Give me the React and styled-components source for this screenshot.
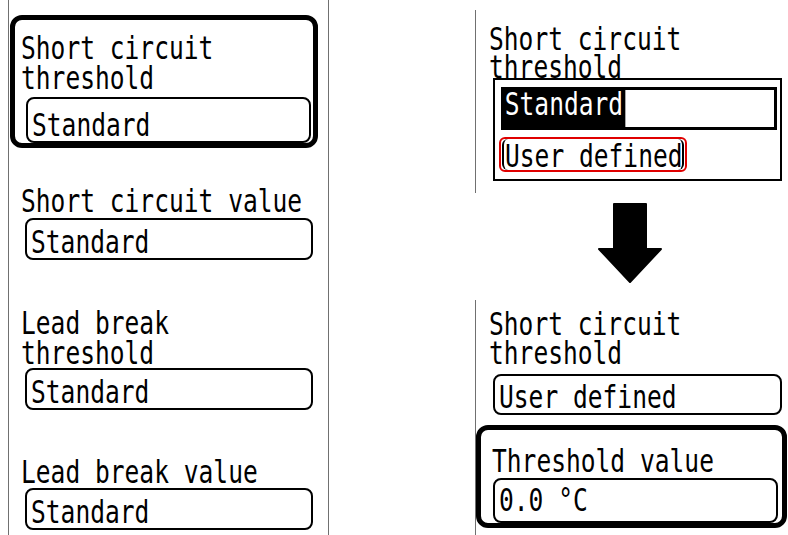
import React from "react";
import styled, { createGlobalStyle } from "styled-components";

const GlobalStyle = createGlobalStyle`
  html, body {
    margin: 0;
    padding: 0;
    background: #fff;
  }
  body {
    width: 788px;
    height: 535px;
    overflow: hidden;
  }
`;

const Page = styled.div`
  display: flex;
  align-items: flex-start;
  width: 788px;
  height: 535px;
  padding-left: 8px;
  box-sizing: border-box;
  font-family: "DejaVu Sans Mono", "Liberation Mono", monospace;
  font-size: 32px;
  line-height: 30px;
  color: #000;
`;

const LeftScreen = styled.div`
  width: 321px;
  height: 535px;
  box-sizing: border-box;
  border-left: 1px solid #707070;
  border-right: 1px solid #707070;
  padding: 15px 0 0 1px;
`;

const RightColumn = styled.div`
  margin-left: 146px;
  width: 313px;
  display: flex;
  flex-direction: column;
`;

const RightScreen = styled.div`
  border-left: 1px solid #707070;
  padding-top: ${(p) => p.$padTop}px;
  padding-bottom: ${(p) => p.$padBottom || 0}px;
  margin-top: ${(p) => p.$top}px;
  height: ${(p) => (p.$height ? `${p.$height}px` : "auto")};
  box-sizing: border-box;
`;

// LCD glyphs are narrow and tall: squeeze a monospace face horizontally
const Lcd = styled.span`
  display: inline-block;
  white-space: pre;
  transform: scaleX(0.768);
  transform-origin: 0 0;
`;

const Label = styled.div`
  padding-left: ${(p) => p.$indent}px;
  margin-top: ${(p) => p.$top || 0}px;
  margin-bottom: ${(p) => p.$bottom || 0}px;
  line-height: ${(p) => p.$lh || 30}px;
`;

const ValueBox = styled.div`
  box-sizing: border-box;
  width: ${(p) => p.$w}px;
  margin-left: ${(p) => p.$x}px;
  margin-top: ${(p) => p.$top || 0}px;
  padding: ${(p) => p.$padTop}px 0 ${(p) => p.$padBottom}px 4px;
  border: 2px solid #000;
  border-radius: 8px;
  overflow: visible;
`;

const Card = styled.div`
  box-sizing: border-box;
  width: ${(p) => p.$w}px;
  margin-top: ${(p) => p.$top || 0}px;
  border: 5px solid #000;
  border-radius: 12px;
  padding: ${(p) => p.$padTop}px 0 ${(p) => p.$padBottom || 0}px 0;
`;

const Popup = styled.div`
  box-sizing: border-box;
  width: 289px;
  margin: -3px 0 12px 17px;
  border: 2px solid #000;
  padding: 7px 0 7px 0;
`;

const SelectedRow = styled.div`
  box-sizing: border-box;
  width: 276px;
  height: 43px;
  margin-left: 6px;
  border: 3px solid #000;
  display: flex;
`;

const Chip = styled.span`
  display: inline-block;
  height: 37px;
  background: #000;
  color: #fff;
  line-height: 28px;
  padding: 0 3px 0 1px;
  white-space: pre;
  transform: scaleX(0.768);
  transform-origin: 0 0;
`;

const OptionRow = styled.div`
  box-sizing: border-box;
  width: 188px;
  margin: 7px 0 0 4px;
  border: 2px solid #e00000;
  border-radius: 6px;
`;

const OptionInner = styled.div`
  box-sizing: border-box;
  width: 182px;
  margin: 0 1px;
  padding: 3px 0 0 1px;
  line-height: 28px;
  border-left: 2px solid #000;
  border-right: 2px solid #000;
  border-radius: 6px;
  overflow: visible;
`;

const ArrowWrap = styled.div`
  margin: 10px 0 0 123px;
  height: 80px;
`;

function DownArrow() {
  return (
    <svg width="64" height="80" viewBox="0 0 64 80">
      <path
        d="M16 1 H48 V46 H63 L32 79 L1 46 H16 Z"
        fill="#000"
        stroke="#000"
        strokeWidth="2"
        strokeLinejoin="round"
      />
    </svg>
  );
}

function Field({ label, value, top, boxTop, lh }) {
  return (
    <>
      <Label $indent={11} $top={top} $lh={lh}>
        <Lcd>{label}</Lcd>
      </Label>
      <ValueBox $x={15} $w={288} $top={boxTop} $padTop={7} $padBottom={1}>
        <Lcd>{value}</Lcd>
      </ValueBox>
    </>
  );
}

export default function App() {
  return (
    <>
      <GlobalStyle />
      <Page>
        <LeftScreen>
          <Card $w={308} $padTop={13} $padBottom={0}>
            <Label $indent={6}>
              <Lcd>{"Short circuit\nthreshold"}</Lcd>
            </Label>
            <ValueBox $x={11} $w={285} $top={4} $padTop={11} $padBottom={1}>
              <Lcd>Standard</Lcd>
            </ValueBox>
          </Card>
          <Field label="Short circuit value" value="Standard" top={38} boxTop={2} />
          <Field label={"Lead break\nthreshold"} value="Standard" top={48} boxTop={0} />
          <Field label="Lead break value" value="Standard" top={47} boxTop={1} />
        </LeftScreen>

        <RightColumn>
          <RightScreen $top={10} $padTop={15}>
            <Label $indent={13} $lh={28}>
              <Lcd>{"Short circuit\nthreshold"}</Lcd>
            </Label>
            <Popup>
              <SelectedRow>
                <Chip>Standard</Chip>
              </SelectedRow>
              <OptionRow>
                <OptionInner>
                  <Lcd>User defined</Lcd>
                </OptionInner>
              </OptionRow>
            </Popup>
          </RightScreen>

          <ArrowWrap>
            <DownArrow />
          </ArrowWrap>

          <RightScreen $top={17} $padTop={10} $height={235}>
            <Label $indent={13} $lh={29}>
              <Lcd>{"Short circuit\nthreshold"}</Lcd>
            </Label>
            <ValueBox $x={17} $w={289} $top={6} $padTop={6} $padBottom={1}>
              <Lcd>User defined</Lcd>
            </ValueBox>
            <Card $w={311} $top={10} $padTop={16}>
              <Label $indent={11}>
                <Lcd>Threshold value</Lcd>
              </Label>
              <ValueBox $x={12} $w={285} $top={2} $padTop={5} $padBottom={6}>
                <Lcd>0.0 °C</Lcd>
              </ValueBox>
            </Card>
          </RightScreen>
        </RightColumn>
      </Page>
    </>
  );
}
